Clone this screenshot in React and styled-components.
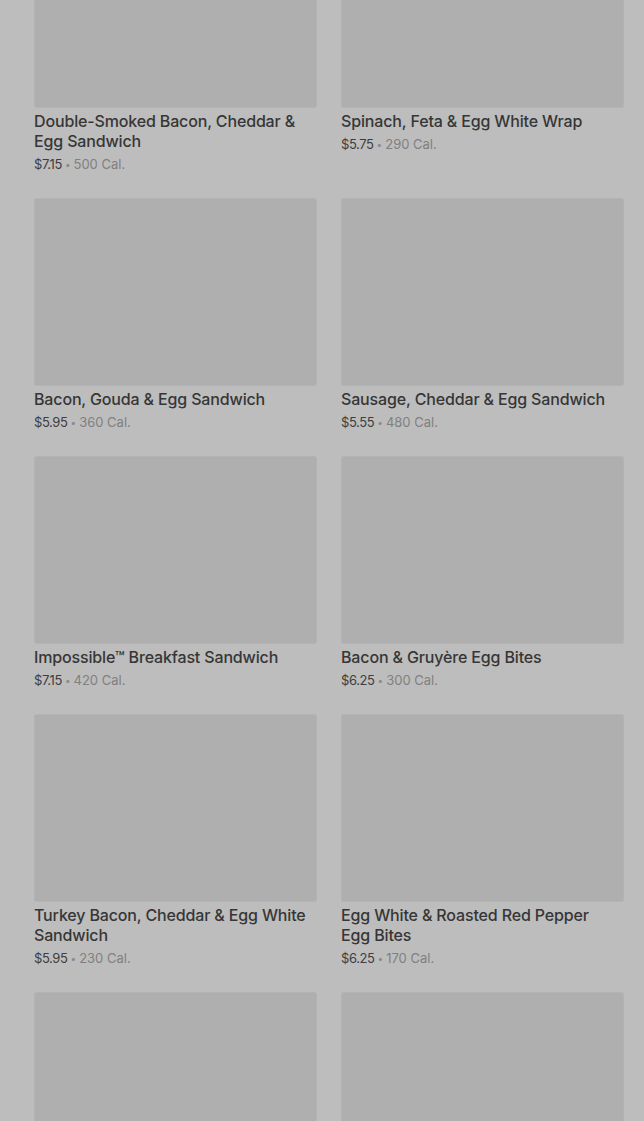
import styled, { createGlobalStyle } from 'styled-components';

const GlobalStyle = createGlobalStyle`
  html, body {
    margin: 0;
    padding: 0;
    background: #bdbdbd;
    overflow: hidden;
  }
  body {
    font-family: Inter, "Noto Sans", sans-serif;
  }
`;

const items = [
  { name: 'Double-Smoked Bacon, Cheddar & Egg Sandwich', price: '$7.15', cal: '500' },
  { name: 'Spinach, Feta & Egg White Wrap', price: '$5.75', cal: '290' },
  { name: 'Bacon, Gouda & Egg Sandwich', price: '$5.95', cal: '360' },
  { name: 'Sausage, Cheddar & Egg Sandwich', price: '$5.55', cal: '480' },
  { name: 'Impossible™ Breakfast Sandwich', price: '$7.15', cal: '420' },
  { name: 'Bacon & Gruyère Egg Bites', price: '$6.25', cal: '300' },
  { name: 'Turkey Bacon, Cheddar & Egg White Sandwich', price: '$5.95', cal: '230' },
  { name: 'Egg White & Roasted Red Pepper Egg Bites', price: '$6.25', cal: '170' },
  { name: '', price: '', cal: '' },
  { name: '', price: '', cal: '' },
];

const Page = styled.div`
  height: 1121px;
  overflow: hidden;
  padding: 0 20px 0 34px;
`;

/* list is scrolled: first row's photo sits partly above the viewport */
const Grid = styled.ul`
  list-style: none;
  margin: -80px 0 0;
  padding: 0;
  display: grid;
  grid-template-columns: 283px 283px;
  column-gap: 24px;
  row-gap: 25px;
  align-items: start;
`;

const Card = styled.li`
  display: flex;
  flex-direction: column;
`;

const Photo = styled.div`
  height: 188px;
  border-radius: 3px;
  background: #afafaf;
  box-shadow: inset 0 0 0 1px rgba(255, 255, 255, 0.06);
  margin-bottom: 3px;
`;

const Name = styled.h3`
  margin: 0;
  padding-right: 6px;
  font-size: 16px;
  line-height: 20px;
  font-weight: 500;
  color: #363636;
  letter-spacing: -0.15px;
`;

const Meta = styled.p`
  margin: 4px 0 0;
  font-size: 13px;
  line-height: 18px;
  color: #808080;
`;

const Price = styled.span`
  color: #3e3e3e;
  letter-spacing: -0.4px;
`;

const Dot = styled.span`
  margin: 0 3px;
  color: #8a8a8a;
  font-size: 10px;
  line-height: 0;
  vertical-align: 1px;
`;

function MenuCard({ item }) {
  return (
    <Card>
      <Photo />
      {item.name && <Name>{item.name}</Name>}
      {item.price && (
        <Meta>
          <Price>{item.price}</Price>
          <Dot>•</Dot>
          {item.cal} Cal.
        </Meta>
      )}
    </Card>
  );
}

export default function App() {
  return (
    <>
      <GlobalStyle />
      <Page>
        <Grid>
          {items.map((item, i) => (
            <MenuCard key={i} item={item} />
          ))}
        </Grid>
      </Page>
    </>
  );
}
